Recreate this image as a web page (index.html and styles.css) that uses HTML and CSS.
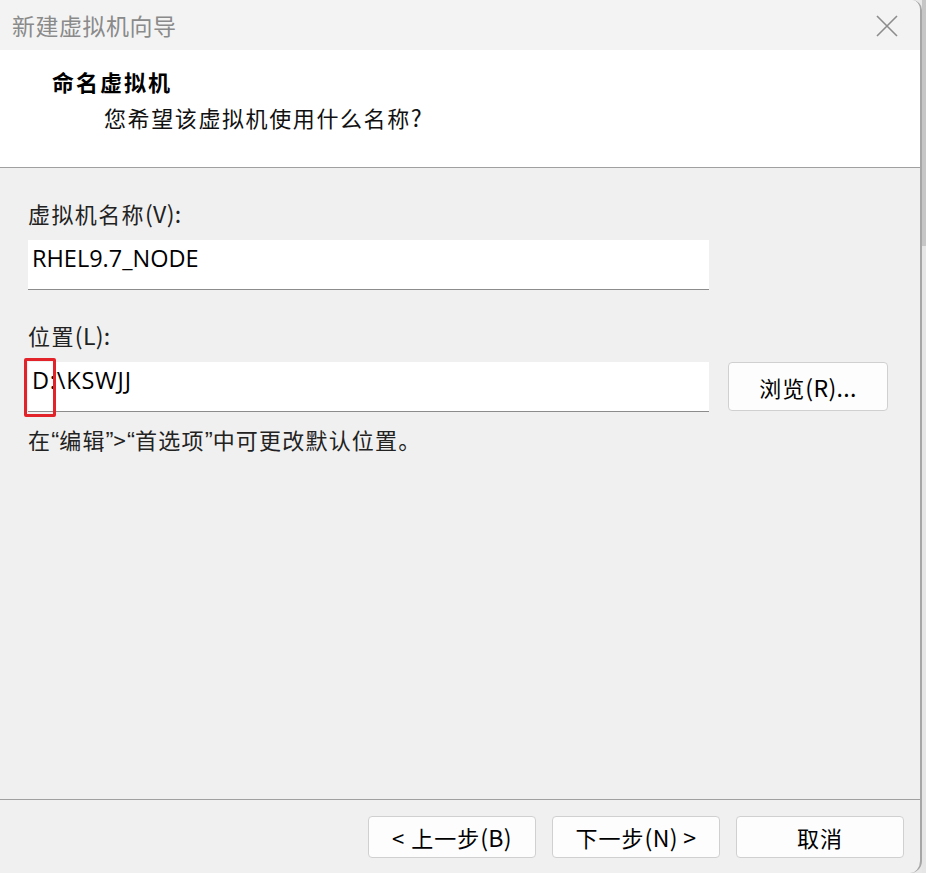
FILE: index.html
```html
<!DOCTYPE html>
<html lang="zh-CN">
<head>
<meta charset="UTF-8">
<meta name="viewport" content="width=device-width, initial-scale=1.0">
<link rel="stylesheet" href="styles.css">
<title>新建虚拟机向导</title>
</head>
<body>
<div class="window">
  <div class="titlebar">
    <span class="title">新建虚拟机向导</span>
    <svg class="close" width="22" height="22" viewBox="0 0 22 22"><path d="M1 1 L21 21 M21 1 L1 21" stroke="#8c8c8c" stroke-width="1.6" fill="none"/></svg>
  </div>
  <div class="header">
    <div class="head-title">命名虚拟机</div>
    <div class="head-sub">您希望该虚拟机使用什么名称<span class="lat">?</span></div>
  </div>
  <div class="content">
    <div class="label">虚拟机名称<span class="lat">(V):</span></div>
    <div class="field">RHEL9.7_NODE</div>
    <div class="label label-loc">位置<span class="lat">(L):</span></div>
    <div class="row">
      <div class="field field-loc">D:\KSWJJ<span class="mark"></span></div>
      <button class="btn btn-browse">浏览<span class="lat">(R)...</span></button>
    </div>
    <div class="hint">在<span class="q">“</span>编辑<span class="q">”</span>&gt;<span class="q">“</span>首选项<span class="q">”</span>中可更改默认位置。</div>
  </div>
  <div class="footer">
    <button class="btn btn-nav">&lt; 上一步<span class="lat">(B)</span></button>
    <button class="btn btn-nav">下一步<span class="lat">(N) &gt;</span></button>
    <button class="btn btn-nav">取消</button>
  </div>
</div>
<div class="edge"><div class="edge-top"></div></div>
</body>
</html>
```

FILE: styles.css
```css
html, body { height: 100%; }
body { margin: 0; display: flex; background: #e8e8e8; font-family: "Noto Sans CJK SC", "Microsoft YaHei", sans-serif; color: #000; overflow: hidden; }
.window { width: 920px; height: 873px; display: flex; flex-direction: column; background: #f0f0f0; border-right: 2px solid #a6a6a6; border-radius: 0 10px 12px 0; overflow: hidden; }
.edge { width: 4px; background: #e6e6e6; }
.edge-top { height: 246px; background: #c6c6c6; }

.titlebar { height: 50px; flex: none; background: #f3f3f3; display: flex; align-items: center; justify-content: space-between; padding: 0 22px 0 12px; }
.title { font-size: 23px; color: #8a8a8a; letter-spacing: 0.5px; }
.close { margin-top: 1px; }

.header { flex: none; background: #fff; border-bottom: 1px solid #a0a0a0; padding: 16px 0 0 52px; box-sizing: border-box; height: 118px; }
.head-title { font-size: 22px; font-weight: bold; line-height: 30px; letter-spacing: 2px; }
.head-sub { font-size: 22px; line-height: 30px; margin: 6px 0 0 52px; color: #111; letter-spacing: 1.6px; }

.content { flex: 1; padding: 30px 0 0 28px; }
.label { font-size: 22px; line-height: 30px; color: #222; letter-spacing: 1.4px; }
.label-loc { margin-top: 30px; }
.lat { letter-spacing: 0.3px; font-size: 1.05em; }
.field { width: 681px; height: 50px; margin-top: 12px; background: #fff; border-bottom: 1px solid #8c8c8c; font-family: "Open Sans", "Noto Sans CJK SC", sans-serif; font-size: 23.5px; line-height: 36px; padding-left: 4px; box-sizing: border-box; }
.row { display: flex; align-items: flex-start; gap: 19px; }
.field-loc { position: relative; letter-spacing: 0.8px; }
.mark { position: absolute; left: -4px; top: -4px; width: 32px; height: 59px; box-sizing: border-box; border: 3px solid #e3232a; border-radius: 2px; }
.btn { font-family: "Noto Sans CJK SC", sans-serif; font-size: 22px; color: #000; background: #fdfdfd; border: 1px solid #d0d0d0; border-radius: 4px; padding: 0; letter-spacing: 1px; }
.btn-browse { width: 160px; height: 49px; margin-top: 12px; }
.hint { font-size: 22px; line-height: 30px; margin-top: 12px; color: #222; letter-spacing: 1.2px; }
.q { letter-spacing: 0; font-family: "Liberation Sans", sans-serif; font-size: 24px; }

.footer { height: 74px; flex: none; border-top: 1px solid #a0a0a0; display: flex; gap: 16px; justify-content: flex-end; padding: 16px 16px 0 0; box-sizing: border-box; }
.btn-nav { width: 168px; height: 42px; }
```
